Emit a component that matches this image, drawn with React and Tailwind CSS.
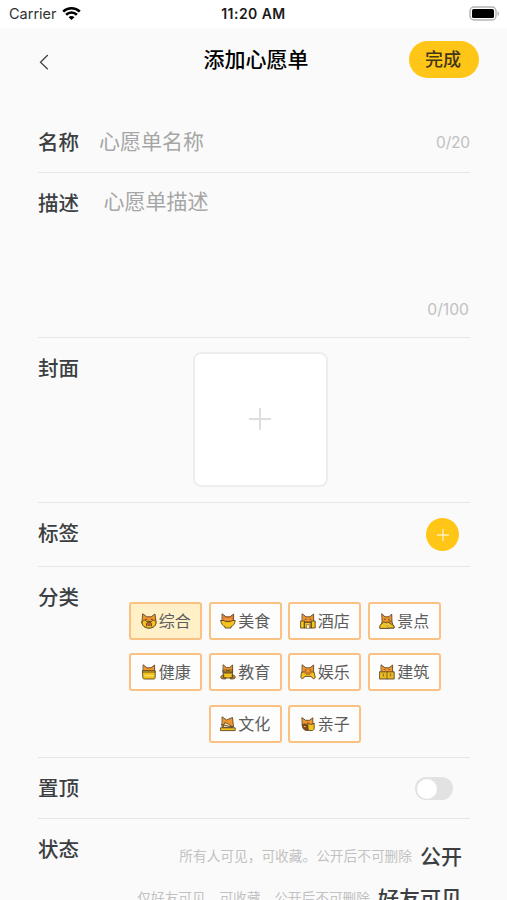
import React, { useState } from "react";

const INK = "#5c4627";
const ORANGE = "#f2962c";
const YELLOW = "#f3c41c";

const CatHead = () => (
  <path d="M2.4 1 L6 3.8 H10 L13.6 1 V9 H2.4 Z" fill={ORANGE} />
);

const icons = {
  general: (
    <>
      <path d="M2 1 L5.8 3.8 H10.2 L14 1 L15 9 C15 13 12 15 8 15 C4 15 1 13 1 9 Z" fill={ORANGE} />
      <path d="M1 9 C2 7 4 6.5 5.5 8.5 H10.5 C12 6.5 14 7 15 9 C15 13 12 15 8 15 C4 15 1 13 1 9 Z" fill={YELLOW} />
      <path d="M4.6 6.4h1.2M10.2 6.4h1.2M5.5 13V11c0-2.6 5-2.6 5 0v2" fill="#df6b28" />
      <path d="M8 10.5v2.2" />
    </>
  ),
  food: (
    <>
      <path d="M2.4 1 L6 3.8 H10 L13.6 1 V9 H2.4 Z" fill="#e87d2b" />
      <path d="M4.5 6.2 H11.5" stroke="#f9b45c" />
      <path d="M.8 7.5 H4 L5.5 8.6 H10.5 L12 7.5 H15.2 C15 11 13 13 11 13.5 V15 H5 V13.5 C3 13 1 11 .8 7.5 Z" fill={YELLOW} />
    </>
  ),
  hotel: (
    <>
      <CatHead />
      <path d="M5.2 6.2h1M9.8 6.2h1" />
      <path d="M.8 8 H4.6 V15 H.8 Z M11.4 8 H15.2 V15 H11.4 Z M4.6 9.4 H11.4 V15 H4.6 Z" fill={YELLOW} />
      <path d="M6.6 15v-3.5h2.8V15" fill="#fff1bd" strokeWidth="0.5" />
    </>
  ),
  scenery: (
    <>
      <path d="M3 1 L6 3.8 H10 L12.7 1 L13 9 L15 15 H1 L3 9 Z" fill={ORANGE} />
      <path d="M5.4 6.2h1M9.4 6.2h1M10 8.2h2" />
      <path d="M.8 15 V12.5 L5.2 8.5 L10 15 Z" fill={YELLOW} />
      <path d="M6.5 9.5 L9 9 L15.2 13 V15 H10.4 Z" fill={YELLOW} />
      <path d="M6.5 10.5 L10 14.5" stroke="#fff1bd" />
    </>
  ),
  health: (
    <>
      <CatHead />
      <path d="M1.8 6.6 H14.2 V13.4 C14.2 14.3 13.6 15 12.7 15 H3.3 C2.4 15 1.8 14.3 1.8 13.4 Z" fill={YELLOW} />
      <path d="M1.8 8 H14.2" />
      <path d="M4 11.6 H12" stroke="#fbe489" />
    </>
  ),
  education: (
    <>
      <path d="M3.4 1 L6.4 3.6 H9.6 L12.6 1 V9 H3.4 Z" fill={ORANGE} />
      <path d="M3.4 6 H7 V7.8 H3.4 Z M9 6 H12.6 V7.8 H9 Z M7 6.5h2" fill={YELLOW} />
      <path d="M3.6 9 H12.4 V14 H3.6 Z" fill={YELLOW} />
      <path d="M3.6 11 C1.5 11 .8 12.2 .8 13.4 C.8 14.6 2 15 5.6 15 V13.6 H3.6 Z M12.4 11 C14.5 11 15.2 12.2 15.2 13.4 C15.2 14.6 14 15 10.4 15 V13.6 H12.4 Z" fill="#c98a26" />
    </>
  ),
  fun: (
    <>
      <CatHead />
      <path d="M5.2 6h1M9.8 6h1" />
      <path d="M2 8 H6 V10 H10 V8 H14 L15.2 13 C15.4 14.6 13.3 15.4 12.4 14 L11.2 12.4 H4.8 L3.6 14 C2.7 15.4 .6 14.6 .8 13 Z" fill={YELLOW} />
      <path d="M5 9 H11" stroke="#e87d2b" strokeWidth="1.3" />
    </>
  ),
  building: (
    <>
      <CatHead />
      <path d="M5.2 5.6h1M9.8 5.6h1" strokeWidth="0.6" />
      <path d="M.8 7.8 H15.2 V15 H.8 Z" fill="#e6b923" />
      <path d="M8 7.8 V15 M4.4 10v2 M11.6 10v2" strokeWidth="0.7" />
    </>
  ),
  culture: (
    <>
      <path d="M2.4 1 L6.5 4 L12.5 1.5 L13.5 11 H2.4 Z" fill={ORANGE} />
      <path d="M3 11 L4.8 6.5 L8.3 8 L12.5 11 Z" fill="#fff0c5" />
      <path d="M1.5 8.5 L12.5 11" />
      <path d="M.8 11.8 H15.2 V14.6 H.8 Z" fill={YELLOW} />
    </>
  ),
  family: (
    <>
      <path d="M2.2 1.8 L5.6 4.3 H9.5 L12.8 1.8 V9.5 C12.8 13 10.8 14.5 7.5 14.5 C4 14.5 2.2 12.5 2.2 9.5 Z" fill={ORANGE} />
      <path d="M2.6 8.6 C4 7.6 6 7.8 7.5 9 V14.3 C5 14.2 3 12.5 2.6 8.6 Z" fill="#864617" />
      <path d="M4.2 10.6h1.4" stroke="#f9b45c" />
      <path d="M8 7 L9.6 8.2 H12.6 L14.2 7 V12.4 C14.2 14 12.8 14.6 11 14.6 C9 14.6 8 14 8 12.4 Z" fill={YELLOW} />
    </>
  ),
};

const categories = [
  { name: "综合", icon: "general" },
  { name: "美食", icon: "food" },
  { name: "酒店", icon: "hotel" },
  { name: "景点", icon: "scenery" },
  { name: "健康", icon: "health" },
  { name: "教育", icon: "education" },
  { name: "娱乐", icon: "fun" },
  { name: "建筑", icon: "building" },
  { name: "文化", icon: "culture" },
  { name: "亲子", icon: "family" },
];

const StatusBar = () => (
  <div className="flex h-7 items-center justify-between bg-white pr-[7px] pl-[9px] text-black">
    <div className="flex w-[158px] items-center gap-[5px] text-[14.5px]">
      <span className="text-[#303030]">Carrier</span>
      <svg width="19" height="15" viewBox="0 0 19 15" fill="none" stroke="#000" strokeWidth="2.6" className="-mt-[2px]">
        <path d="M1.2 5.6C5.8 1.1 13.2 1.1 17.8 5.6" />
        <path d="M4.1 8.7c3-2.9 7.8-2.9 10.8 0" />
        <path d="M9.5 14 6.6 11.2c1.6-1.5 4.2-1.5 5.8 0Z" fill="#000" stroke="none" />
      </svg>
    </div>
    <span className="-mt-px text-[14px] font-semibold tracking-[0.45px] text-[#1a1a1a]">11:20 AM</span>
    <div className="flex w-40 justify-end">
      <svg width="31" height="15" viewBox="0 0 31 15" className="-mt-[2px]">
        <rect x="1" y="1" width="26" height="13" rx="4" fill="#fff" stroke="#b3b3b3" strokeWidth="1.4" />
        <rect x="3" y="3" width="22" height="9" rx="1.6" fill="#000" />
        <path d="M28.5 5.2c2 .7 2 3.9 0 4.6z" fill="#b3b3b3" />
      </svg>
    </div>
  </div>
);

const Row = ({ label, className, children }) => (
  <section className={`flex border-b border-[#e6e6e6] ${className}`}>
    <h2 className="w-[41px] shrink-0 pt-px text-[20.5px] leading-[30px] font-medium text-[#3b3f42]">{label}</h2>
    {children}
  </section>
);

export default function App() {
  const [selected, setSelected] = useState("general");
  const [pinned, setPinned] = useState(false);

  return (
    <div className="h-[900px] w-[507px] overflow-hidden bg-[#fafafa] font-[Inter,'Noto_Sans_CJK_SC',sans-serif]">
      <StatusBar />
      <header className="flex h-[63px] items-center justify-between pr-7 pl-[38px]">
        <button className="flex w-[65px] pt-1">
          <svg width="12" height="16" viewBox="0 0 12 16" fill="none" stroke="#444" strokeWidth="1.3">
            <path d="M9.8 1 2.5 8.2l7.3 7" />
          </svg>
        </button>
        <h1 className="text-[21px] font-medium text-black">添加心愿单</h1>
        <button className="h-[37px] w-[70px] rounded-full bg-[#ffc517] pr-[2px] text-[18px] font-medium text-[#413719]">
          完成
        </button>
      </header>

      <main className="pr-[37px] pl-[38px]">
        <Row label="名称" className="h-[82px] items-start pt-9">
          <span className="ml-5 flex-1 text-[21px] leading-[30px] text-[#a6a6a6]">心愿单名称</span>
          <span className="text-[15.5px] leading-[31px] tracking-[-0.15px] text-[#c0c0c0]">0/20</span>
        </Row>
        <Row label="描述" className="h-[165px] pt-[15px]">
          <span className="ml-[24.5px] flex-1 text-[21px] leading-[28px] text-[#a6a6a6]">心愿单描述</span>
          <span className="self-end pr-px pb-[15px] text-[15.7px] leading-6 text-[#c0c0c0]">0/100</span>
        </Row>
        <Row label="封面" className="h-[165px] pt-[15px]">
          <button className="-mt-px ml-[114px] flex h-[135px] w-[135px] items-center justify-center rounded-[8px] border-2 border-[#ededed] bg-white">
            <svg width="24" height="24" viewBox="0 0 24 24" fill="none" stroke="#dedede" strokeWidth="2" className="mr-px mb-px">
              <path d="M12 1v22M1 12h22" />
            </svg>
          </button>
        </Row>
        <Row label="标签" className="h-16 justify-between pt-[15px] pr-[11px]">
          <button className="flex h-[33px] w-[33px] items-center justify-center rounded-full bg-[#ffc517]">
            <svg width="12" height="12" viewBox="0 0 12 12" fill="none" stroke="#fff0bd" strokeWidth="1.4">
              <path d="M6 0v12M0 6h12" />
            </svg>
          </button>
        </Row>
        <Row label="分类" className="h-[191px] pt-[15px]">
          <div className="ml-[49px] flex w-[314px] flex-wrap content-start justify-center gap-x-[6.5px] gap-y-[13.7px] pt-[19.5px]">
            {categories.map((item) => (
              <button
                key={item.icon}
                onClick={() => setSelected(item.icon)}
                className={`flex h-[38px] w-[73px] items-center justify-center gap-[2px] rounded-[3px] border-2 border-[#fac282] text-[16px] text-[#5c5c5c] ${
                  selected === item.icon ? "bg-[#fff0c8]" : "bg-[#fdfdfd]"
                }`}
              >
                <svg width="16" height="16" viewBox="0 0 16 16" fill="none" stroke={INK} strokeWidth="0.9" strokeLinejoin="round" strokeLinecap="round">
                  {icons[item.icon]}
                </svg>
                {item.name}
              </button>
            ))}
          </div>
        </Row>
        <Row label="置顶" className="h-[61px] justify-between pt-[15px] pr-[17px]">
          <button
            onClick={() => setPinned(!pinned)}
            className={`mt-1 flex h-[23px] w-[38px] items-center rounded-full p-[2px] ${
              pinned ? "justify-end bg-[#ffc517]" : "bg-[#e2e2e2]"
            }`}
          >
            <span className="h-5 w-5 rounded-full bg-white" />
          </button>
        </Row>
        <Row label="状态" className="h-[160px] justify-between pt-[15px] pr-2">
          <div className="flex flex-col items-end gap-[12px] pt-[8px]">
            <div className="flex items-center gap-2 leading-[30px]">
              <span className="-mt-[3px] text-[13.7px] text-[#c2c2c2]">所有人可见，可收藏。公开后不可删除</span>
              <span className="text-[21px] font-medium text-[#3b3f42]">公开</span>
            </div>
            <div className="flex items-center gap-2 leading-[30px]">
              <span className="-mt-[3px] text-[13.7px] text-[#c2c2c2]">仅好友可见，可收藏。公开后不可删除</span>
              <span className="text-[21px] font-medium text-[#3b3f42]">好友可见</span>
            </div>
          </div>
        </Row>
      </main>
    </div>
  );
}
